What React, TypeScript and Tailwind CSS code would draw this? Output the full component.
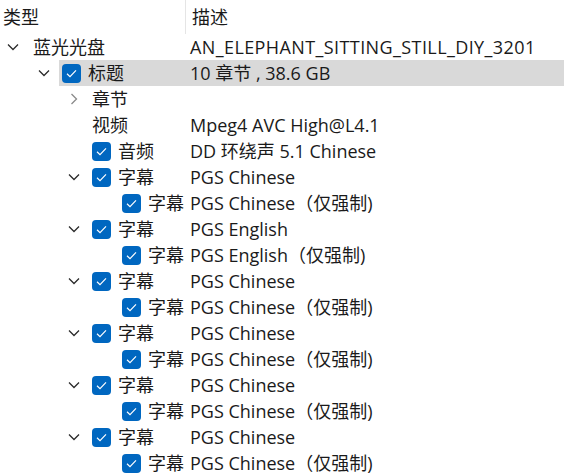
import React from "react";

type Row = {
  level: number;
  expand?: "open" | "closed";
  checked?: boolean;
  type: string;
  desc: string;
  selected?: boolean;
  wide?: boolean;
};

const ROWS: Row[] = [
  { level: 0, expand: "open", type: "蓝光光盘", desc: "AN_ELEPHANT_SITTING_STILL_DIY_3201", wide: true },
  { level: 1, expand: "open", checked: true, type: "标题", desc: "10 章节 , 38.6 GB", selected: true },
  { level: 2, expand: "closed", type: "章节", desc: "" },
  { level: 2, type: "视频", desc: "Mpeg4 AVC High@L4.1" },
  { level: 2, checked: true, type: "音频", desc: "DD 环绕声 5.1 Chinese" },
  { level: 2, expand: "open", checked: true, type: "字幕", desc: "PGS Chinese" },
  { level: 3, checked: true, type: "字幕", desc: "PGS Chinese（仅强制)" },
  { level: 2, expand: "open", checked: true, type: "字幕", desc: "PGS English" },
  { level: 3, checked: true, type: "字幕", desc: "PGS English（仅强制)" },
  { level: 2, expand: "open", checked: true, type: "字幕", desc: "PGS Chinese" },
  { level: 3, checked: true, type: "字幕", desc: "PGS Chinese（仅强制)" },
  { level: 2, expand: "open", checked: true, type: "字幕", desc: "PGS Chinese" },
  { level: 3, checked: true, type: "字幕", desc: "PGS Chinese（仅强制)" },
  { level: 2, expand: "open", checked: true, type: "字幕", desc: "PGS Chinese" },
  { level: 3, checked: true, type: "字幕", desc: "PGS Chinese（仅强制)" },
  { level: 2, expand: "open", checked: true, type: "字幕", desc: "PGS Chinese" },
  { level: 3, checked: true, type: "字幕", desc: "PGS Chinese（仅强制)" },
];

const INDENT = ["w-0", "w-[31px]", "w-[61px]", "w-[91px]"];

function Chevron({ kind }: { kind?: "open" | "closed" }) {
  return (
    <span className="flex h-full w-[26px] shrink-0 items-center justify-center">
      {kind === "open" && (
        <svg width="12" height="8" viewBox="0 0 12 8" fill="none">
          <path d="M1 1.5 L6 6.5 L11 1.5" stroke="#2b2b2b" strokeWidth="1.3" />
        </svg>
      )}
      {kind === "closed" && (
        <svg width="8" height="12" viewBox="0 0 8 12" fill="none">
          <path d="M1.5 1 L6.5 6 L1.5 11" stroke="#8a8a8a" strokeWidth="1.3" />
        </svg>
      )}
    </span>
  );
}

function Check() {
  return (
    <span className="flex h-[19px] w-[19px] shrink-0 items-center justify-center rounded-[4px] bg-[#0067c0]">
      <svg width="11" height="9" viewBox="0 0 11 9" fill="none">
        <path d="M1 4.8 L4 7.6 L10 1.4" stroke="#ffffff" strokeWidth="1.2" />
      </svg>
    </span>
  );
}

export default function App() {
  return (
    <div
      className="h-[476px] w-[564px] overflow-hidden bg-white text-[18px] text-[#1a1a1a]"
      style={{ fontFamily: '"Open Sans", "Noto Sans CJK SC", sans-serif' }}
    >
      {/* Header */}
      <div className="flex h-[34px]">
        <div className="flex w-[186px] items-center border-r border-[#e5e5e5] pl-[3px]">类型</div>
        <div className="flex items-center pl-[6px]">描述</div>
      </div>

      {ROWS.map((r, i) => (
        <div key={i} className="relative flex h-[26px] items-center whitespace-nowrap">
          {r.selected && <div className="absolute inset-y-0 left-[59px] right-0 bg-[#d9d9d9]" />}
          <div className="relative flex h-full w-[190px] shrink-0 items-center">
            <span className={INDENT[r.level] + " shrink-0"} />
            <Chevron kind={r.expand} />
            {r.checked && (
              <span className="ml-[5px] flex items-center">
                <Check />
              </span>
            )}
            <span className={r.level === 0 ? "ml-[7px]" : r.checked ? "ml-[7px]" : "ml-[5px]"}>{r.type}</span>
          </div>
          <div className={r.wide ? "relative tracking-[0.4px]" : "relative"}>{r.desc}</div>
        </div>
      ))}
    </div>
  );
}
